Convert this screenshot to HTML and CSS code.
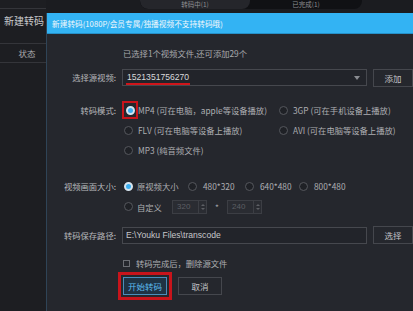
FILE: index.html
```html
<!DOCTYPE html>
<html lang="zh-CN">
<head>
<meta charset="utf-8">
<title>新建转码</title>
<link rel="stylesheet" href="styles.css">
</head>
<body>
<div class="app">
  <aside class="sidebar">
    <div class="side-cell side-new">新建转码</div>
    <div class="side-cell side-status">状态</div>
  </aside>
  <main class="main">
    <div class="topstrip">
      <div class="tabs">
        <div class="tab tab-a"><span>转码中(1)</span></div>
        <div class="tab tab-b"><span>已完成(1)</span></div>
      </div>
    </div>
    <section class="dialog">
      <header class="titlebar">新建转码(1080P/会员专属/独播视频不支持转码哦)</header>
      <div class="body">
        <div class="row row-info">
          <div class="label"></div>
          <div class="content info">已选择1个视频文件,还可添加29个</div>
        </div>
        <div class="row row-source">
          <div class="label">选择源视频:</div>
          <div class="content">
            <div class="select"><span class="mark-line">1521351756270</span><span class="arrow"></span></div>
            <button class="btn side-btn">添加</button>
          </div>
        </div>
        <div class="row row-mode">
          <div class="label label-top">转码模式:</div>
          <div class="content grid-mode">
            <div class="opt"><span class="mark-box"><span class="radio on"></span></span><span>MP4 (可在电脑，apple等设备播放)</span></div>
            <div class="opt"><span class="radio"></span><span>3GP (可在手机设备上播放)</span></div>
            <div class="opt"><span class="radio"></span><span>FLV (可在电脑等设备上播放)</span></div>
            <div class="opt"><span class="radio"></span><span>AVI (可在电脑等设备上播放)</span></div>
            <div class="opt"><span class="radio"></span><span>MP3 (纯音频文件)</span></div>
          </div>
        </div>
        <div class="row row-size">
          <div class="label label-top">视频画面大小:</div>
          <div class="content size-col">
            <div class="size-line">
              <div class="opt s1"><span class="radio on"></span><span>原视频大小</span></div>
              <div class="opt s2"><span class="radio"></span><span>480*320</span></div>
              <div class="opt s3"><span class="radio"></span><span>640*480</span></div>
              <div class="opt s4"><span class="radio"></span><span>800*480</span></div>
            </div>
            <div class="size-line custom">
              <div class="opt s1c"><span class="radio"></span><span>自定义</span></div>
              <div class="spin"><span class="spin-val">320</span><span class="spin-btns"><i class="up"></i><i class="down"></i></span></div>
              <span class="times">*</span>
              <div class="spin"><span class="spin-val">240</span><span class="spin-btns"><i class="up"></i><i class="down"></i></span></div>
            </div>
          </div>
        </div>
        <div class="row row-path">
          <div class="label">转码保存路径:</div>
          <div class="content">
            <div class="input">E:\Youku Files\transcode</div>
            <button class="btn side-btn">选择</button>
          </div>
        </div>
        <div class="row row-check">
          <div class="label"></div>
          <div class="content check-line"><span class="checkbox"></span><span>转码完成后，删除源文件</span></div>
        </div>
        <div class="row row-actions">
          <div class="label"></div>
          <div class="content actions">
            <button class="btn primary">开始转码</button>
            <button class="btn cancel">取消</button>
          </div>
        </div>
      </div>
    </section>
  </main>
</div>
</body>
</html>
```

FILE: styles.css
```css
* { box-sizing: border-box; }
html, body { margin: 0; padding: 0; }
body {
  width: 413px;
  height: 311px;
  overflow: hidden;
  background: #1b1c20;
  font-family: "Noto Sans CJK SC", "Liberation Sans", sans-serif;
  font-size: 8.3px;
  color: #b4b5b8;
}
.app { display: flex; width: 413px; height: 311px; }
.sidebar {
  width: 46px;
  flex: none;
  padding-top: 8px;
  background: #1d1e22;
}
.side-cell {
  border-top: 1px solid #34353a;
  text-align: center;
}
.side-new {
  height: 35px;
  padding-top: 4px;
  font-size: 10px;
  line-height: 16px;
  color: #c9cacd;
  text-align: left;
  padding-left: 4px;
  white-space: nowrap;
}
.side-status {
  height: 20px;
  line-height: 19px;
  font-size: 8.5px;
  color: #a9aaad;
  border-bottom: 1px solid #34353a;
  padding-left: 8px;
}
.main { flex: 1; display: flex; flex-direction: column; min-width: 0; }
.topstrip { height: 13px; flex: none; background: #1b1c20; }
.tabs {
  margin-left: 94px;
  width: 222px;
  height: 9px;
  display: flex;
  background: #101114;
  border-radius: 0 0 8px 8px;
  overflow: hidden;
}
.tab { height: 9px; text-align: center; color: #8d8e92; font-size: 6.5px; }
.tab span { display: block; line-height: 9px; }
.tab-a { width: 110px; background: #25262b; border-radius: 0 0 8px 8px; }
.tab-b { flex: 1; }
.dialog {
  flex: 1;
  background: #25272d;
  border-left: 1px solid #2f4457;
  display: flex;
  flex-direction: column;
}
.titlebar {
  height: 21px;
  flex: none;
  background: #33b3f3;
  color: #f2f8fc;
  font-size: 7.7px;
  line-height: 21px;
  padding-left: 5px;
  white-space: nowrap;
  border-bottom: 1px solid #2590c8;
}
.body { padding-top: 13px; }
.row { display: flex; }
.label {
  width: 69px;
  flex: none;
  text-align: right;
  white-space: nowrap;
  color: #b7b8bb;
}
.content { margin-left: 6px; display: flex; align-items: center; white-space: nowrap; }
.row-info { height: 12px; line-height: 12px; }
.info { padding-left: 1px; color: #a9aaae; }
.row-source { margin-top: 10px; height: 17px; }
.row-source .label, .row-path .label { line-height: 17px; }
.select {
  width: 245px;
  height: 17px;
  border: 1px solid #46484e;
  background: #22242a;
  display: flex;
  align-items: flex-start;
  padding-left: 3px;
  color: #d9dadc;
}
.mark-line {
  display: inline-block;
  line-height: 12px;
  margin-top: 1px;
  padding: 0 1px;
  border-bottom: 2px solid #d0151a;
  font-family: "Liberation Sans", sans-serif;
  font-size: 8.6px;
}
.arrow {
  margin-left: auto;
  margin-right: 6px;
  margin-top: 6px;
  width: 0; height: 0;
  border-left: 3px solid transparent;
  border-right: 3px solid transparent;
  border-top: 4px solid #8a8c91;
}
.btn {
  font-family: inherit;
  font-size: 8.5px;
  color: #c2c3c6;
  background: #25272d;
  border: 1px solid #45474d;
  padding: 0;
  height: 18px;
}
.side-btn { margin-left: 6px; width: 40px; height: 18px; line-height: 16px; }
.row-mode { margin-top: 14px; }
.label-top { line-height: 20px; }
.grid-mode {
  display: grid;
  grid-template-columns: 155px auto;
  align-items: center;
}
.opt { display: flex; align-items: center; height: 20px; color: #adaeb2; }
.radio {
  width: 9px; height: 9px;
  border-radius: 50%;
  border: 1px solid #55575d;
  background: #1f2126;
  flex: none;
  margin-left: 2px;
  margin-right: 5px;
}
.radio.on {
  background: #3aaef0;
  border: 2px solid #d6e4ee;
}
.mark-box {
  width: 16px;
  height: 18px;
  border: 2px solid #c8141b;
  display: flex;
  align-items: center;
  justify-content: center;
  flex: none;
  margin-right: 0;
}
.mark-box .radio { margin: 0; }
.row-size { margin-top: 16px; }
.size-col { flex-direction: column; align-items: flex-start; }
.size-line { display: flex; align-items: center; height: 20px; }
.size-line.custom { height: 21px; }
.s1 { width: 66px; }
.s2 { width: 57px; }
.s3 { width: 54px; }
.radio + span { line-height: 12px; }
.s1 .radio, .s1c .radio { margin-right: 4px; }
.s2 .radio, .s3 .radio, .s4 .radio { margin-left: 0; margin-right: 6px; }
.s1c { width: 50px; }
.spin {
  width: 35px; height: 14px;
  border: 1px solid #3c3e44;
  background: #2a2c32;
  display: flex;
}
.spin-val {
  flex: 1;
  padding-left: 4px;
  line-height: 12px;
  color: #5d5f64;
  font-family: "Liberation Sans", sans-serif;
  font-size: 8px;
}
.spin-btns {
  width: 8px;
  border-left: 1px solid #3c3e44;
  display: flex;
  flex-direction: column;
  align-items: center;
  justify-content: center;
  gap: 2px;
}
.spin-btns i { display: block; width: 0; height: 0; border-left: 2px solid transparent; border-right: 2px solid transparent; }
.spin-btns .up { border-bottom: 2px solid #5d5f64; }
.spin-btns .down { border-top: 2px solid #5d5f64; }
.times { width: 20px; text-align: center; color: #9c9da1; }
.row-path { margin-top: 10px; height: 17px; }
.input {
  width: 245px;
  height: 17px;
  border: 1px solid #46484e;
  background: #22242a;
  padding-left: 3px;
  line-height: 15px;
  color: #c6c7ca;
  font-family: "Liberation Sans", sans-serif;
  font-size: 8.6px;
}
.row-path .side-btn { margin-top: -1px; }
.row-check { margin-top: 13px; height: 12px; }
.check-line { line-height: 12px; color: #aeafb3; }
.checkbox {
  width: 7px; height: 7px;
  border: 1px solid #6b6d73;
  margin-left: 1px;
  margin-right: 6px;
  flex: none;
}
.row-actions { margin-top: 8px; }
.actions { gap: 11px; }
.primary {
  margin-left: 1px;
  width: 44px;
  color: #5cbcf0;
  background: #1f3344;
  border-color: #4a8dbb;
  outline: 3px solid #c8141b;
  outline-offset: 2px;
}
.cancel { width: 44px; }
```
